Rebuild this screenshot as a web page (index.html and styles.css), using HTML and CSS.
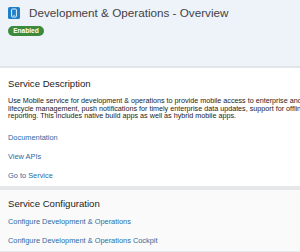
FILE: index.html
```html
<!DOCTYPE html>
<html>
<head>
  <meta charset="UTF-8">
  <title>Development &amp; Operations - Overview</title>
  <link rel="stylesheet" href="styles.css">
</head>
<body>
  <div class="page-header">
    <div class="title-row">
      <span class="service-icon">
        <svg width="12" height="12" viewBox="0 0 12 12">
          <rect x="0" y="0" width="12" height="12" rx="1.5" fill="#1e80c8"/>
          <rect x="3.6" y="2" width="4.8" height="8" rx="0.8" fill="none" stroke="#fff" stroke-width="0.9"/>
          <line x1="5.2" y1="8.6" x2="6.8" y2="8.6" stroke="#fff" stroke-width="0.7"/>
        </svg>
      </span>
      <h1>Development &amp; Operations - Overview</h1>
    </div>
    <span class="status-badge">Enabled</span>
  </div>

  <div class="card">
    <h2>Service Description</h2>
    <p class="description">Use Mobile service for development &amp; operations to provide mobile access to enterprise and cloud systems, offering<br>lifecycle management, push notifications for timely enterprise data updates, support for offline usage and usage<br>reporting. This includes native build apps as well as hybrid mobile apps.</p>
    <div class="link-list">
      <a href="#">Documentation</a>
      <a href="#">View APIs</a>
      <a href="#">Go to Service</a>
    </div>
  </div>

  <div class="card card-grey">
    <h2>Service Configuration</h2>
    <div class="link-list">
      <a href="#">Configure Development &amp; Operations</a>
      <a href="#">Configure Development &amp; Operations Cockpit</a>
    </div>
  </div>
</body>
</html>
```

FILE: styles.css
```css
body {
  margin: 0;
  font-family: 'Liberation Sans', Arial, sans-serif;
  background-color: #e6e7e9;
  color: #333;
  overflow: hidden;
}

/* header */
.page-header {
  background-color: #eef2f9;
  height: 68px;
  padding: 6px 8px 0;
  box-sizing: border-box;
  border-bottom: 2px solid #e1e4e9;
}

.title-row {
  display: flex;
  align-items: center;
  gap: 9px;
}

.service-icon {
  display: flex;
  width: 12px;
  height: 12px;
}

h1 {
  margin: 0;
  font-size: 11.7px;
  font-weight: normal;
  color: #3f4347;
  line-height: 13px;
}

.status-badge {
  display: inline-block;
  margin-top: 7px;
  width: 36px;
  height: 10px;
  line-height: 10px;
  text-align: center;
  border-radius: 5px;
  background-color: #3c8a3c;
  color: #fff;
  font-size: 6.6px;
  font-weight: bold;
}

/* cards */
.card {
  background-color: #fff;
  padding: 10px 8px 6px;
  margin-bottom: 4px;
  overflow: hidden;
}

.card-grey {
  background-color: #fafafa;
  padding-top: 8px;
}

h2 {
  margin: 0 0 8px;
  font-size: 9.6px;
  font-weight: normal;
  color: #222;
  line-height: 11px;
}

.description {
  margin: 0 0 13px;
  font-size: 7.2px;
  line-height: 7.6px;
  color: #222;
  white-space: nowrap;
}

.link-list {
  display: flex;
  flex-direction: column;
  gap: 10px;
}

.link-list a {
  font-size: 7.4px;
  line-height: 9px;
  color: #2b6b9f;
  text-decoration: none;
}
```
